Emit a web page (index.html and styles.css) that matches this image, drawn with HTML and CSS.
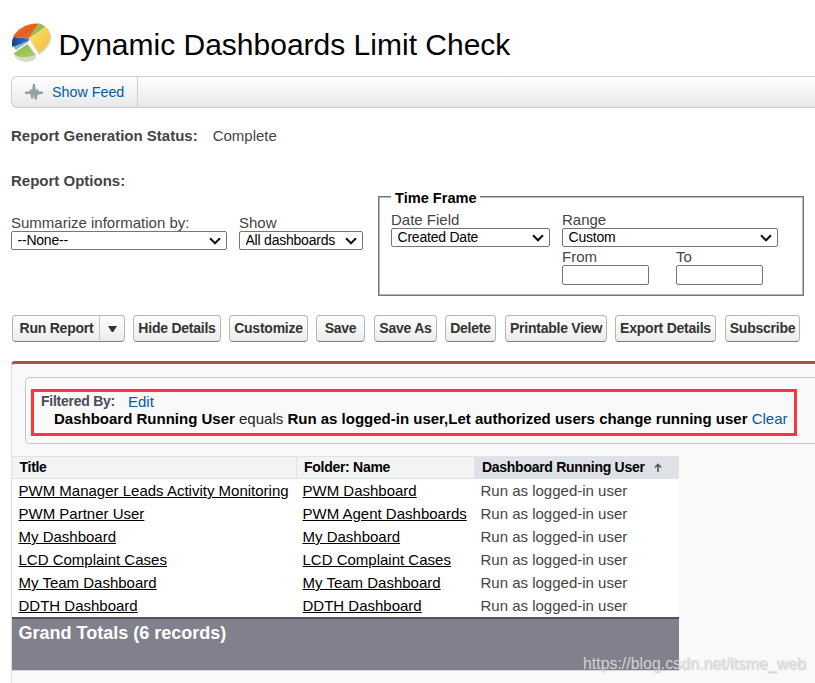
FILE: index.html
```html
<!DOCTYPE html>
<html lang="en">
<head>
<meta charset="utf-8">
<title>Dynamic Dashboards Limit Check</title>
<link rel="stylesheet" href="styles.css">
</head>
<body>
<header class="page-header">
  <svg class="logo" width="42" height="42" viewBox="0 0 42 42">
    <defs>
      <linearGradient id="or" x1="0" y1="0" x2="1" y2="1"><stop offset="0" stop-color="#f28a3c"/><stop offset=".5" stop-color="#e65a1e"/><stop offset="1" stop-color="#f0843a"/></linearGradient>
      <linearGradient id="ye" x1="0" y1="0" x2="1" y2="1"><stop offset="0" stop-color="#ffe37a"/><stop offset="1" stop-color="#f2bd2c"/></linearGradient>
      <linearGradient id="gr" x1="0" y1="0" x2="1" y2="1"><stop offset="0" stop-color="#84b83c"/><stop offset="1" stop-color="#aed06c"/></linearGradient>
      <linearGradient id="bl" x1="0" y1="0" x2="1" y2="0"><stop offset="0" stop-color="#153f8c"/><stop offset="1" stop-color="#3f78bd"/></linearGradient>
    </defs>
    <path d="M19 16.500L3 23.500Q3.500 26 6 28L18 20Z" fill="#7cbbd3"/>
    <path d="M19 16.500L3.500 15Q1 20 2.500 25L19 18.500Z" fill="url(#bl)"/>
    <path d="M19 16.500L3 15C7 7 16 1 29 1.500Z" fill="url(#or)"/>
    <path d="M19 16.500L29 1.500Q33 2 35.500 5Z" fill="#93c04c"/>
    <path d="M19 16.500L28 30.500V33Q42 25 41 13L37.500 6Z" fill="#d6d1ba"/>
    <path d="M19 16.500L35.500 5C44 12 39 24 28.500 30.500Z" fill="url(#ye)"/>
    <path d="M3.500 31.500Q5 39 16 40Q24 39.500 26 35.500L25.500 32Z" fill="#d5dbc8"/>
    <path d="M17.500 22L3.500 31.500Q10 38 25.700 33Z" fill="url(#gr)"/>
  </svg>
  <h1>Dynamic Dashboards Limit Check</h1>
</header>

<nav class="feed-bar">
  <a class="feed-link">
    <svg width="20" height="20" viewBox="0 0 20 20"><path d="M1 10.800h4.500L7 8.500l1.200 7L10 3l1.700 13.500 1.600-8 1.400 3 1-.7H19" fill="none" stroke="#96a0a5" stroke-width="2.400" stroke-linejoin="round"/></svg>
    <span>Show Feed</span>
  </a>
</nav>

<section class="status"><b>Report Generation Status:</b><span>Complete</span></section>

<section class="options">
  <div class="options-left">
    <b>Report Options:</b>
    <div class="fields">
      <label class="w-summary">Summarize information by:<span class="select"><select><option>--None--</option></select><svg width="12" height="8" viewBox="0 0 12 8"><path d="M1 1.300l5 5 5-5"/></svg></span></label>
      <label class="w-show">Show<span class="select"><select><option>All dashboards</option></select><svg width="12" height="8" viewBox="0 0 12 8"><path d="M1 1.300l5 5 5-5"/></svg></span></label>
    </div>
  </div>
  <div class="time-frame">
    <span class="legend">Time Frame</span>
    <label class="w-date">Date Field<span class="select"><select><option>Created Date</option></select><svg width="12" height="8" viewBox="0 0 12 8"><path d="M1 1.300l5 5 5-5"/></svg></span></label>
    <div class="range">
      <label>Range<span class="select"><select><option>Custom</option></select><svg width="12" height="8" viewBox="0 0 12 8"><path d="M1 1.300l5 5 5-5"/></svg></span></label>
      <div class="dates">
        <label>From<input type="text"></label>
        <label>To<input type="text"></label>
      </div>
    </div>
  </div>
</section>

<div class="buttons">
  <div class="btn split b1"><span>Run Report</span><i><svg width="9" height="6" viewBox="0 0 9 6"><path d="M0 0h9L5.200 6H3.800z" fill="#333"/></svg></i></div>
  <div class="btn b2">Hide Details</div>
  <div class="btn b3">Customize</div>
  <div class="btn b4">Save</div>
  <div class="btn b5">Save As</div>
  <div class="btn b6">Delete</div>
  <div class="btn b7">Printable View</div>
  <div class="btn b8">Export Details</div>
  <div class="btn b9">Subscribe</div>
</div>

<main class="report">
  <div class="filter">
    <div class="highlight">
      <div class="filter-head"><b>Filtered By:</b><a>Edit</a></div>
      <div class="filter-rule"><b>Dashboard Running User</b> equals <b>Run as logged-in user,Let authorized users change running user</b> <a>Clear</a></div>
    </div>
  </div>
  <table>
    <colgroup><col class="c1"><col class="c2"><col class="c3"></colgroup>
    <thead><tr><th>Title</th><th>Folder: Name</th><th class="sorted">Dashboard Running User<svg width="8" height="9" viewBox="0 0 8 9"><path d="M4 9V1.500M1 4.500L4 1.300 7 4.500" fill="none" stroke="#555" stroke-width="1.600"/></svg></th></tr></thead>
    <tbody>
      <tr><td><a>PWM Manager Leads Activity Monitoring</a></td><td><a>PWM Dashboard</a></td><td>Run as logged-in user</td></tr>
      <tr><td><a>PWM Partner User</a></td><td><a>PWM Agent Dashboards</a></td><td>Run as logged-in user</td></tr>
      <tr><td><a>My Dashboard</a></td><td><a>My Dashboard</a></td><td>Run as logged-in user</td></tr>
      <tr><td><a>LCD Complaint Cases</a></td><td><a>LCD Complaint Cases</a></td><td>Run as logged-in user</td></tr>
      <tr><td><a>My Team Dashboard</a></td><td><a>My Team Dashboard</a></td><td>Run as logged-in user</td></tr>
      <tr><td><a>DDTH Dashboard</a></td><td><a>DDTH Dashboard</a></td><td>Run as logged-in user</td></tr>
    </tbody>
  </table>
  <div class="totals">Grand Totals (6 records)</div>
</main>
<div class="watermark">https://blog.csdn.net/itsme_web</div>
</body>
</html>
```
FILE: styles.css
```css
* { box-sizing: border-box; }
body {
  margin: 0;
  width: 815px;
  height: 683px;
  overflow: hidden;
  position: relative;
  background: #fff;
  color: #444;
  font: 15px/17px "Liberation Sans", Arial, sans-serif;
}
.page-header {
  display: flex;
  align-items: center;
  height: 76px;
  padding: 14px 0 0 10px;
}
.logo { flex: none; margin-right: 6.5px; margin-top: -4px; }
h1 { margin: 0; font-size: 30px; line-height: 34px; font-weight: 400; color: #000; white-space: nowrap; }

.feed-bar {
  margin-left: 11px;
  height: 32px;
  border: 1px solid #cfcfcf;
  border-right: 0;
  border-radius: 6px 0 0 6px;
  background: linear-gradient(#fff, #e8e8e8);
  display: flex;
}
.feed-link {
  display: flex;
  align-items: center;
  width: 126px;
  padding-left: 12px;
  gap: 8px;
  border-right: 1px solid #cfcfcf;
  font-size: 14.3px;
  color: #015ba7;
  white-space: nowrap;
}

.status { display: flex; gap: 15px; height: 64px; padding: 19px 0 0 11px; }

.options { display: flex; height: 143px; }
.options-left { width: 378px; padding-left: 11px; }
.fields { display: flex; gap: 12px; margin-top: 25px; }
label { display: flex; flex-direction: column; white-space: nowrap; }
select, input {
  display: block;
  margin: 0;
  font: 14px "Liberation Sans", Arial, sans-serif;
  letter-spacing: -0.22px;
  color: #000;
  background-color: #fff;
  border: 1px solid #767676;
  border-radius: 2px;
}
select { appearance: none; width: 100%; height: 19px; padding: 0 0 1px 5.5px; }
.select { display: grid; }
.select > * { grid-area: 1 / 1; }
.select svg {
  justify-self: end;
  align-self: center;
  margin-right: 6px;
  margin-top: 1px;
  fill: none;
  stroke: #111;
  stroke-width: 2;
  pointer-events: none;
}
input { width: 87px; height: 20px; }
.w-summary { width: 216px; }
.w-show { width: 124px; }
.time-frame {
  position: relative;
  width: 426px;
  height: 100px;
  margin-top: 24px;
  border: 1px solid #757575;
  box-shadow: inset 0 0 0 1px #b8b8b8;
  padding: 14px 0 0 12px;
  display: flex;
  gap: 12px;
}
.legend {
  position: absolute;
  left: 12px;
  top: -7px;
  padding: 0 3px 0 4px;
  background: #fff;
  color: #000;
  font-weight: 700;
  font-size: 14.6px;
  line-height: 16px;
}
.w-date { width: 159px; }
.range { width: 216px; }
.dates { display: flex; gap: 27px; margin-top: 1px; }

.buttons { display: flex; height: 46px; padding-left: 12px; }
.btn {
  flex: none;
  height: 27px;
  border: 1px solid #b5b5b5;
  border-bottom-color: #7f7f7f;
  border-radius: 4px;
  background: linear-gradient(#fff, #ececec);
  color: #333;
  font-size: 14px;
  letter-spacing: -0.24px;
  font-weight: 700;
  line-height: 25px;
  text-align: center;
  white-space: nowrap;
}
.split { display: flex; }
.split span { width: 87px; padding-left: 1px; border-right: 1px solid #c5c5c5; }
.split i { flex: 1; display: flex; align-items: center; justify-content: center; }
.b1 { width: 113px; margin-right: 8px; }
.b2 { width: 88px; margin-right: 8px; }
.b3 { width: 79px; margin-right: 8px; }
.b4 { width: 49px; margin-right: 9px; }
.b5 { width: 63px; margin-right: 8px; }
.b6 { width: 51px; margin-right: 9px; }
.b7 { width: 102px; margin-right: 8px; }
.b8 { width: 101px; margin-right: 9px; }
.b9 { width: 75px; }

.report {
  margin-left: 11px;
  height: 322px;
  border-left: 1px solid #dcdcdc;
  border-top: 3px solid #a85548;
  border-top-left-radius: 4px;
  background: #f9f9f9;
}
.filter {
  margin: 13px 0 12px 13px;
  height: 67px;
  border: 1px solid #c7c7c7;
  border-right: 0;
  border-radius: 5px 0 0 5px;
  padding: 11px 0 0 5px;
}
.highlight {
  width: 766px;
  height: 47px;
  border: 3px solid #ff3636;
  padding: 1px 0 0 7px;
  white-space: nowrap;
}
.filter-head { display: flex; gap: 13px; }
.filter-head b { font-size: 14px; letter-spacing: -0.25px; color: #4a4a56; }
.filter-rule { padding-left: 13px; color: #222; }
.filter-rule b { color: #000; }
.highlight a { color: #015ba7; }

table { width: 667px; table-layout: fixed; border-collapse: separate; border-spacing: 0; background: #fff; }
.c1 { width: 285px; }
.c2 { width: 177px; }
.c3 { width: 205px; }
th, td { height: 23px; padding: 0 0 0 6.5px; text-align: left; white-space: nowrap; vertical-align: middle; line-height: 17px; }
th {
  background: #f2f3f3;
  border: 1px solid #e0e3e5;
  border-left: 0;
  color: #000;
  font-size: 14px;
  letter-spacing: -0.28px;
  padding-left: 7.5px;
}
th:nth-child(2) { border-right: 0; padding-left: 7px; }
.sorted { background: #dee1e5; padding-left: 8px; }
.sorted svg { margin-left: 9px; }
td:nth-child(2) { padding-left: 5.5px; }
td a { color: #000; text-decoration: underline; }
.totals {
  width: 667px;
  height: 54px;
  background: #81818e;
  border-top: 2px solid #57505f;
  border-bottom: 1px solid #dcdcdc;
  padding: 4px 0 0 6.5px;
  font-size: 18px;
  line-height: 20px;
  font-weight: 700;
  color: #fff;
}
.watermark {
  position: absolute;
  left: 583px;
  top: 655px;
  font-size: 15.9px;
  line-height: 18px;
  color: rgba(225, 225, 225, .85);
  text-shadow: 1px 1px 1px rgba(120, 120, 120, .35);
}
```
